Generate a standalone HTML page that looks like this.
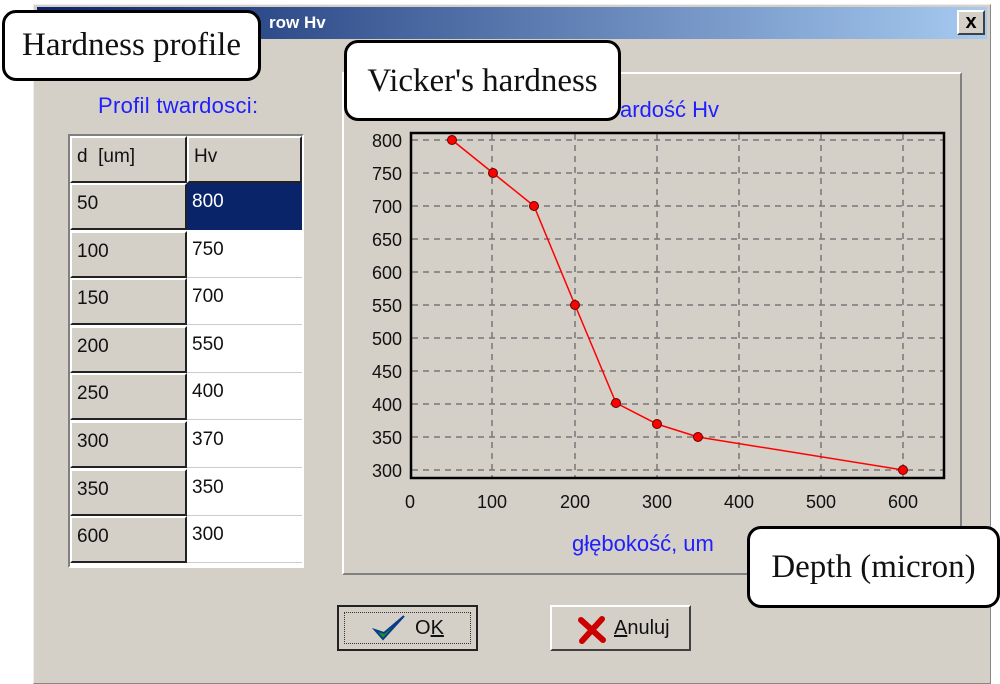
<!DOCTYPE html>
<html><head><meta charset="utf-8"><style>
*{margin:0;padding:0;box-sizing:border-box}
body{width:1000px;height:684px;background:#fff;position:relative;overflow:hidden;font-family:"Liberation Sans",sans-serif}
.win{position:absolute;left:33px;top:4px;width:958px;height:680px;background:#d4d0c8;border:1px solid #888;border-left-color:#eee;border-top-color:#eee}
.title{position:absolute;left:37px;top:7px;width:950px;height:32px;background:linear-gradient(90deg,#0a246a,#a6caf0);color:#fff;font-weight:bold;font-size:17px;line-height:32px}
.xb{position:absolute;left:957px;top:10px;width:28px;height:25px;background:#d4d0c8;border:2px solid;border-color:#fff #404040 #404040 #fff;font-size:20px;font-weight:bold;text-align:center;line-height:20px}
.call{position:absolute;background:#fff;border:3px solid #000;border-radius:14px;font-family:"Liberation Serif",serif;font-size:33px;color:#111;text-align:center;white-space:nowrap}
.blue{position:absolute;color:#2020ff;font-size:22px}
.tbl{position:absolute;left:68px;top:134px;width:236px;height:434px;background:#fff;border:2px solid;border-color:#808080 #fff #fff #808080}
.c{position:absolute;font-size:19px;color:#111;padding:8px 0 0 5px;height:47px}
.g{background:#d4d0c8;border:2px solid;border-color:#fff #222 #222 #fff}
.w{background:#fff;border-bottom:1px solid #ccc}
.btn{position:absolute;top:605px;width:141px;height:46px;background:#d4d0c8;border:2px solid;border-color:#fff #404040 #404040 #fff;font-size:20px;color:#111}
</style></head><body>
<div class="win"></div>
<div class="title"><span style="position:absolute;left:232px">row Hv</span></div>
<div class="xb">x</div>
<div style="position:absolute;left:342px;top:72px;width:620px;height:503px;border:2px solid;border-color:#fff #808080 #808080 #fff"></div>
<div class="blue" style="left:98px;top:93px;letter-spacing:0.3px">Profil twardosci:</div>
<div class="blue" style="left:620px;top:97px">ardość Hv</div>
<div class="blue" style="left:572px;top:531px">głębokość, um</div>
<div class="tbl"></div>
<div id="rows"></div>
<svg style="position:absolute;left:0;top:0" width="1000" height="684" font-family="Liberation Sans" font-size="18" fill="#111">
<g stroke="#777" stroke-dasharray="6,5" stroke-width="1.5">
<line x1="412" x2="943" y1="140" y2="140"/><line x1="412" x2="943" y1="173" y2="173"/><line x1="412" x2="943" y1="206" y2="206"/><line x1="412" x2="943" y1="239" y2="239"/><line x1="412" x2="943" y1="272" y2="272"/><line x1="412" x2="943" y1="305" y2="305"/><line x1="412" x2="943" y1="338" y2="338"/><line x1="412" x2="943" y1="371" y2="371"/><line x1="412" x2="943" y1="404" y2="404"/><line x1="412" x2="943" y1="437" y2="437"/><line x1="412" x2="943" y1="470" y2="470"/>
<line x1="492" x2="492" y1="134" y2="477"/><line x1="575" x2="575" y1="134" y2="477"/><line x1="657" x2="657" y1="134" y2="477"/><line x1="739" x2="739" y1="134" y2="477"/><line x1="821" x2="821" y1="134" y2="477"/><line x1="903" x2="903" y1="134" y2="477"/>
</g>
<rect x="411" y="133" width="533" height="345" fill="none" stroke="#000" stroke-width="2.5"/>
<g text-anchor="end"><text x="402" y="147">800</text><text x="402" y="180">750</text><text x="402" y="213">700</text><text x="402" y="246">650</text><text x="402" y="279">600</text><text x="402" y="312">550</text><text x="402" y="345">500</text><text x="402" y="378">450</text><text x="402" y="411">400</text><text x="402" y="444">350</text><text x="402" y="477">300</text></g>
<g text-anchor="middle"><text x="410" y="508">0</text><text x="492" y="508">100</text><text x="575" y="508">200</text><text x="657" y="508">300</text><text x="739" y="508">400</text><text x="821" y="508">500</text><text x="903" y="508">600</text></g>
<polyline fill="none" stroke="#f00" stroke-width="1.5" points="452,140 493,173 534,206 575,305 616,403 657,424 698,437 903,470"/>
<g fill="#f00" stroke="#600" stroke-width="1"><circle cx="452" cy="140" r="4.5"/><circle cx="493" cy="173" r="4.5"/><circle cx="534" cy="206" r="4.5"/><circle cx="575" cy="305" r="4.5"/><circle cx="616" cy="403" r="4.5"/><circle cx="657" cy="424" r="4.5"/><circle cx="698" cy="437" r="4.5"/><circle cx="903" cy="470" r="4.5"/></g>
</svg>
<div class="btn" style="left:337px;border:2px solid #222"><div style="position:absolute;left:5px;top:5px;right:5px;bottom:5px;border:1px dotted #333"></div>
<svg style="position:absolute;left:33px;top:6px" width="36" height="32"><path d="M3 17 L11 26 L32 3 L12 20 Z" fill="#1a9a1a" stroke="#0a3a8a" stroke-width="2"/></svg>
<span style="position:absolute;left:76px;top:10px">O<u>K</u></span></div>
<div class="btn" style="left:550px"><svg style="position:absolute;left:25px;top:9px" width="30" height="28"><path d="M4 4 L26 24 M25 3 L5 25" stroke="#c00" stroke-width="6" stroke-linecap="round"/></svg>
<span style="position:absolute;left:62px;top:10px"><u>A</u>nuluj</span></div>
<div class="call" style="left:2px;top:10px;width:259px;height:71px;line-height:64px">Hardness profile</div>
<div class="call" style="left:344px;top:40px;width:277px;height:81px;line-height:76px">Vicker's hardness</div>
<div class="call" style="left:747px;top:526px;width:253px;height:82px;line-height:76px">Depth (micron)</div>
<script>
var d=[["50","800"],["100","750"],["150","700"],["200","550"],["250","400"],["300","370"],["350","350"],["600","300"]],h='';
h+='<div class="c g" style="left:70px;top:136px;width:117px">d&nbsp; [um]</div><div class="c g" style="left:187px;top:136px;width:115px">Hv</div>';
d.forEach(function(r,i){var y=183+i*47.6;
h+='<div class="c g" style="left:70px;top:'+y+'px;width:117px">'+r[0]+'</div>';
h+='<div class="c '+(i?'w':'')+'" style="left:187px;top:'+y+'px;width:115px;'+(i?'':'background:#0a246a;color:#fff')+'">'+r[1]+'</div>';});
document.getElementById('rows').innerHTML=h;
</script>
</body></html>
